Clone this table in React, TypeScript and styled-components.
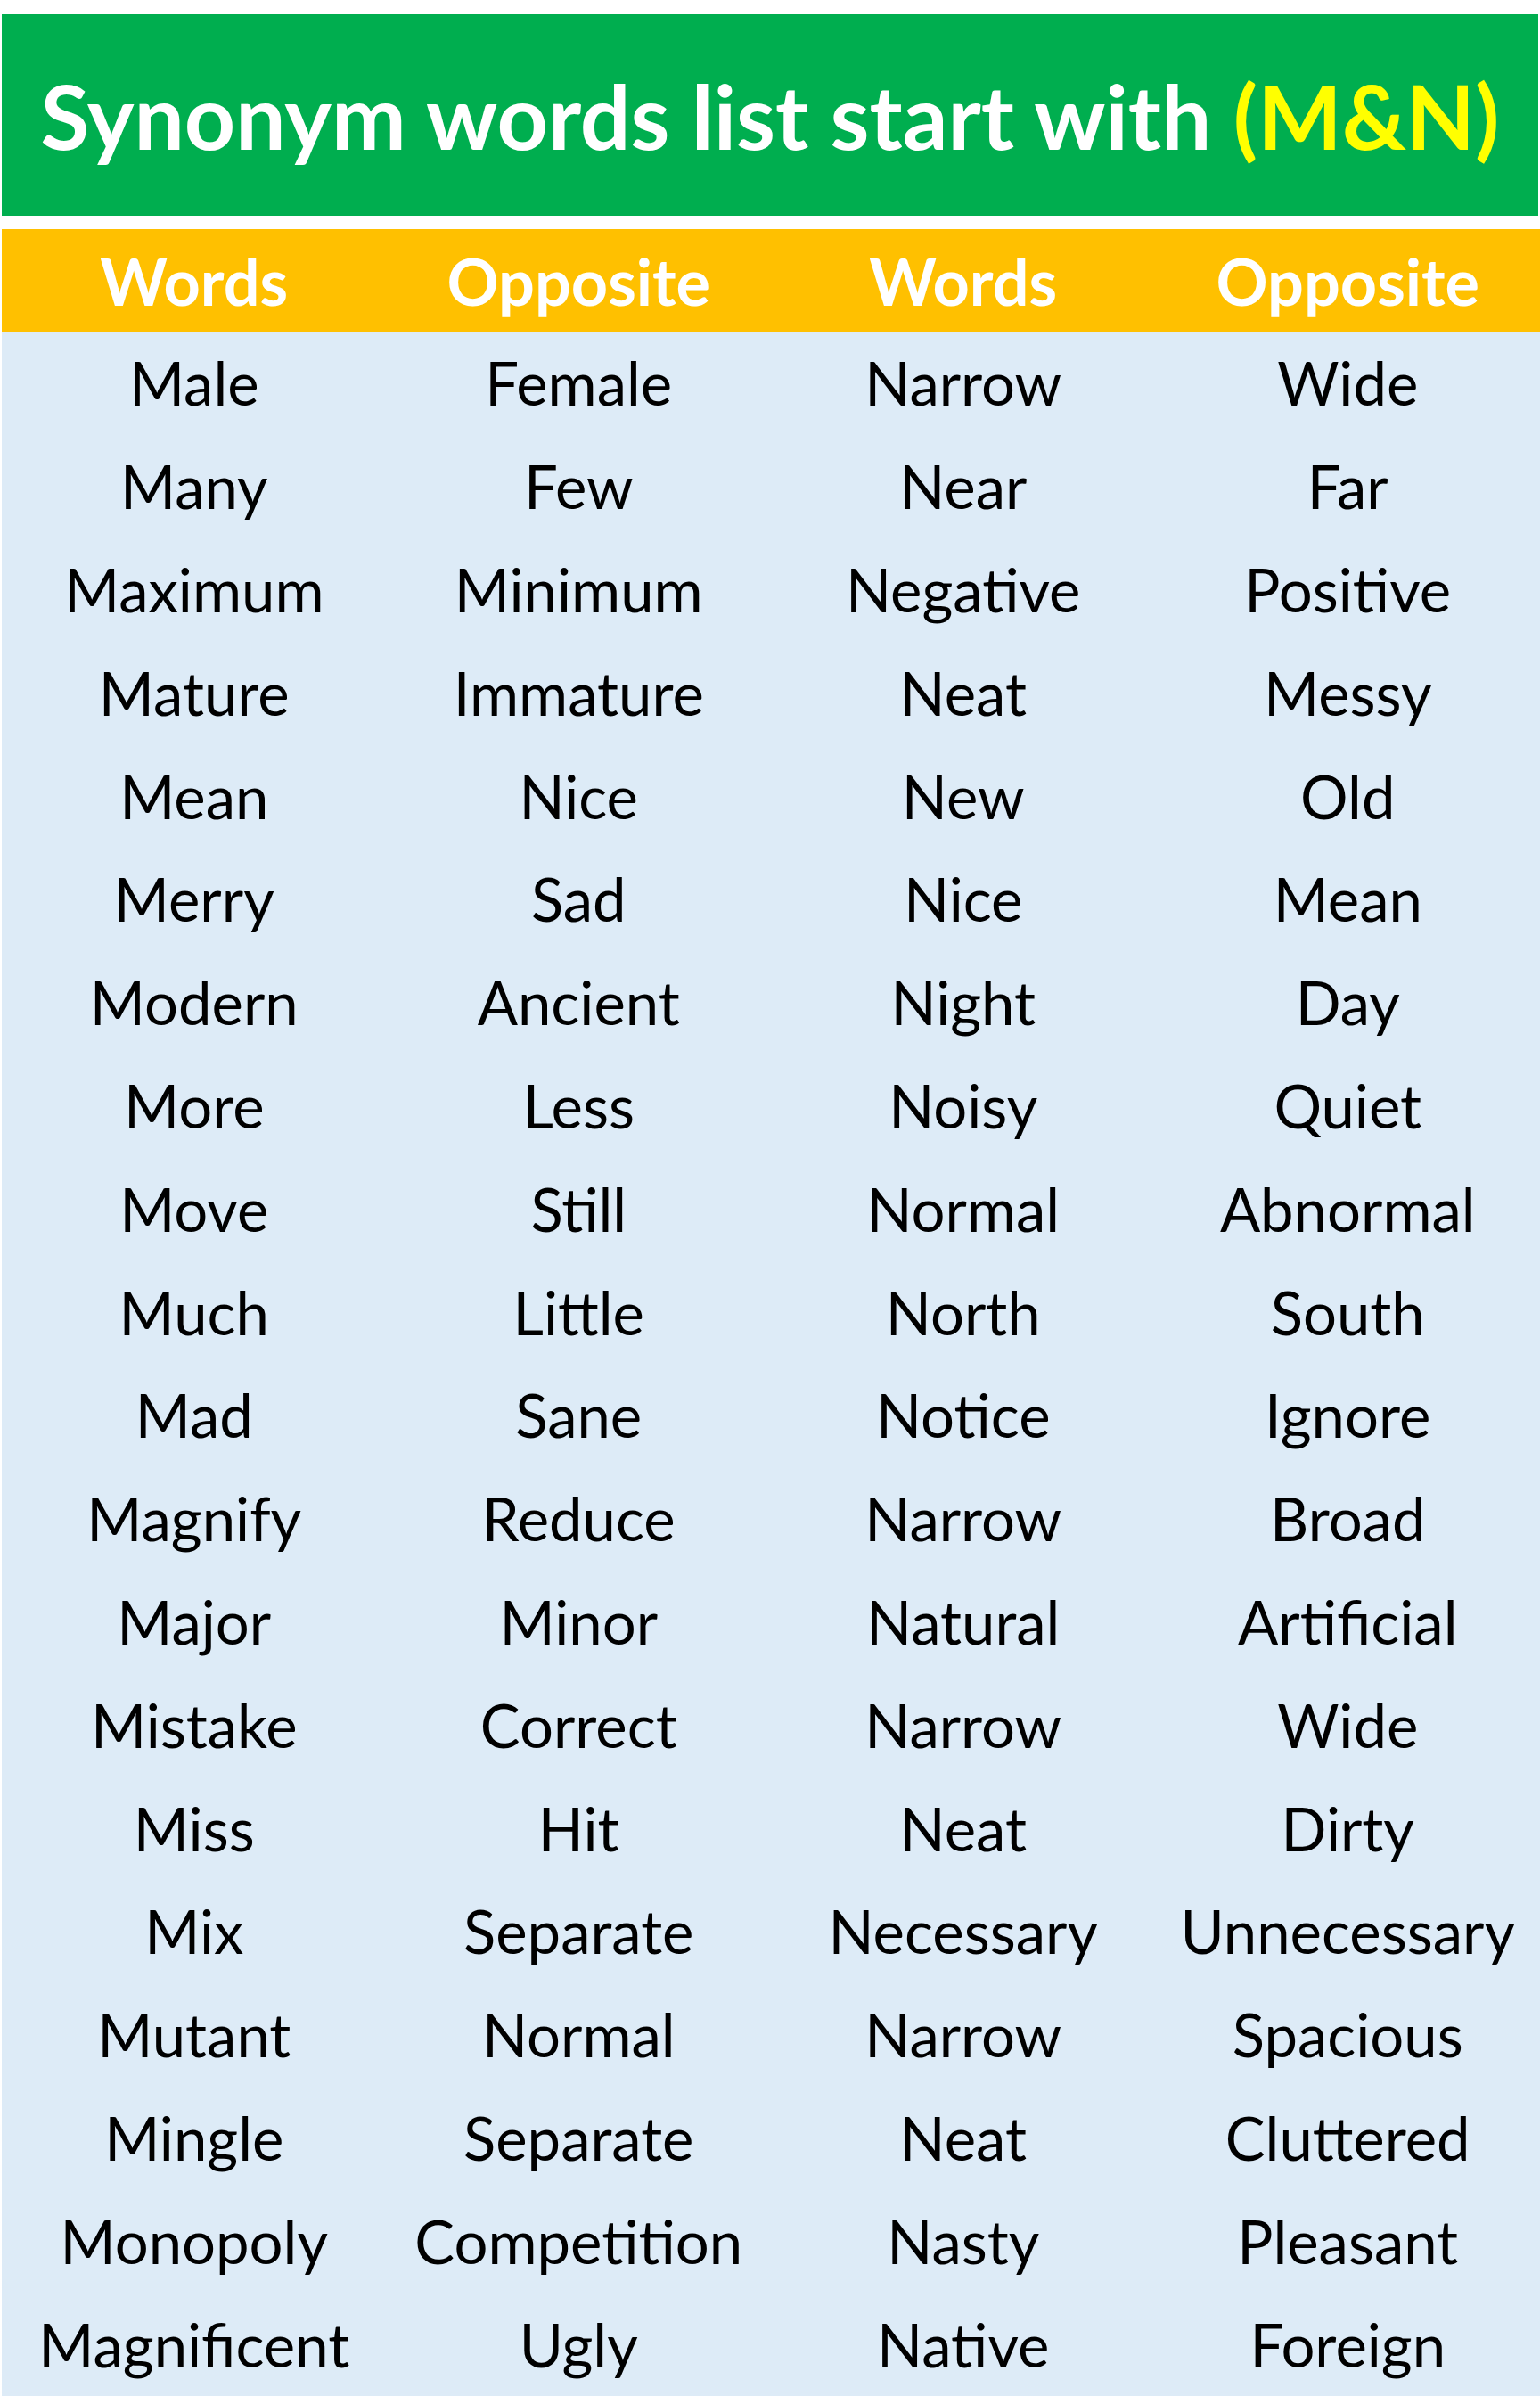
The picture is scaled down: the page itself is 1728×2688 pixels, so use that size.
import React from "react";
import styled, { createGlobalStyle } from "styled-components";

const GlobalStyle = createGlobalStyle`
  html, body {
    margin: 0;
    padding: 0;
    background: #ffffff;
  }
  body {
    font-family: Lato, "Open Sans", "Liberation Sans", sans-serif;
  }
`;

const Page = styled.div`
  width: 1728px;
  height: 2688px;
  display: flex;
  flex-direction: column;
  background: #ffffff;
  overflow: hidden;
`;

const TitleBar = styled.div`
  margin: 16px 2px 0 2px;
  height: 226px;
  background: #00ae4f;
  display: flex;
  align-items: center;
  justify-content: center;
`;

const Title = styled.h1`
  margin: 0;
  font-family: Lato, "Liberation Sans", sans-serif;
  font-weight: 700;
  font-size: 100px;
  line-height: 1;
  color: #ffffff;
  white-space: nowrap;
`;

const Highlight = styled.span`
  color: #ffff00;
`;

const Table = styled.div`
  margin: 15px 0 0 2px;
  flex: 1;
  display: flex;
  flex-direction: column;
`;

const HeaderRow = styled.div`
  height: 115px;
  background: #ffc000;
  display: grid;
  grid-template-columns: repeat(4, 1fr);
  align-items: center;
`;

const HeaderCell = styled.div`
  text-align: center;
  font-weight: 700;
  font-size: 72px;
  line-height: 1;
  color: #ffffff;
`;

const Body = styled.div`
  flex: 1;
  background: #ddebf7;
  display: grid;
  grid-template-columns: repeat(4, 1fr);
  grid-template-rows: repeat(20, 1fr);
  align-items: center;
`;

const Cell = styled.div`
  text-align: center;
  font-weight: 400;
  font-size: 67px;
  line-height: 1;
  color: #000000;
  white-space: nowrap;
`;

const rows: [string, string, string, string][] = [
  ["Male", "Female", "Narrow", "Wide"],
  ["Many", "Few", "Near", "Far"],
  ["Maximum", "Minimum", "Negative", "Positive"],
  ["Mature", "Immature", "Neat", "Messy"],
  ["Mean", "Nice", "New", "Old"],
  ["Merry", "Sad", "Nice", "Mean"],
  ["Modern", "Ancient", "Night", "Day"],
  ["More", "Less", "Noisy", "Quiet"],
  ["Move", "Still", "Normal", "Abnormal"],
  ["Much", "Little", "North", "South"],
  ["Mad", "Sane", "Notice", "Ignore"],
  ["Magnify", "Reduce", "Narrow", "Broad"],
  ["Major", "Minor", "Natural", "Artificial"],
  ["Mistake", "Correct", "Narrow", "Wide"],
  ["Miss", "Hit", "Neat", "Dirty"],
  ["Mix", "Separate", "Necessary", "Unnecessary"],
  ["Mutant", "Normal", "Narrow", "Spacious"],
  ["Mingle", "Separate", "Neat", "Cluttered"],
  ["Monopoly", "Competition", "Nasty", "Pleasant"],
  ["Magnificent", "Ugly", "Native", "Foreign"],
];

export default function App() {
  return (
    <>
      <GlobalStyle />
      <Page>
        <TitleBar>
          <Title>
            Synonym words list start with <Highlight>(M&amp;N)</Highlight>
          </Title>
        </TitleBar>
        <Table>
          <HeaderRow>
            <HeaderCell>Words</HeaderCell>
            <HeaderCell>Opposite</HeaderCell>
            <HeaderCell>Words</HeaderCell>
            <HeaderCell>Opposite</HeaderCell>
          </HeaderRow>
          <Body>
            {rows.map((r, i) =>
              r.map((w, j) => <Cell key={`${i}-${j}`}>{w}</Cell>)
            )}
          </Body>
        </Table>
      </Page>
    </>
  );
}
